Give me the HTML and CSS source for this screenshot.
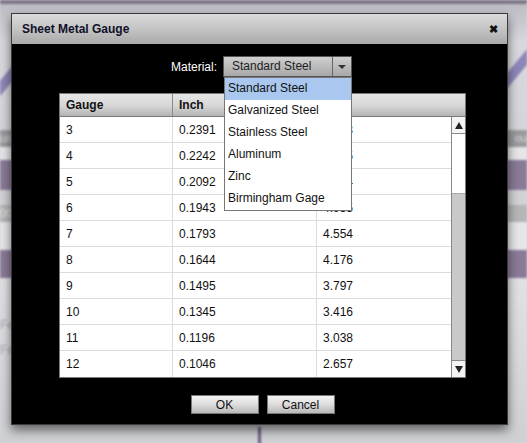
FILE: index.html
```html
<!DOCTYPE html>
<html lang="en">
<head>
  <meta charset="UTF-8">
  <meta name="viewport" content="width=device-width, initial-scale=1.0">
  <title>Sheet Metal Gauge</title>
  <link rel="stylesheet" href="styles.css">
</head>
<body>
  <div class="backdrop">
    <div class="bd-top"></div>
    <div class="bd-head">
      <div class="bd-swoosh left"></div>
      <div class="bd-swoosh right"></div>
    </div>
    <div class="bd-bar"><span>un</span><span>ou</span></div>
    <div class="bd-light"></div>
    <div class="bd-purple"></div>
    <div class="bd-gray"></div>
    <div class="bd-bar2"><span>00</span></div>
    <div class="bd-light tall"></div>
    <div class="bd-purple short"></div>
    <div class="bd-rest">
      <div class="bd-label">Fe</div>
      <div class="bd-label">Fe</div>
      <div class="bd-line"></div>
    </div>
  </div>

  <div class="dialog">
    <div class="dialog-title">
      <span>Sheet Metal Gauge</span>
      <span class="close">&#x2716;</span>
    </div>
    <div class="dialog-body">
      <div class="material-row">
        <label>Material:</label>
        <div class="select">
          <span class="select-text">Standard Steel</span>
          <span class="select-arrow"></span>
        </div>
      </div>

      <div class="grid">
        <div class="grid-head">
          <div class="hcell c1">Gauge</div>
          <div class="hcell c2">Inch</div>
          <div class="hcell c3">mm</div>
        </div>
        <div class="grid-main">
          <div class="grid-rows" id="rows"></div>
          <div class="scrollbar">
            <div class="sb-btn"><span class="tri up"></span></div>
            <div class="sb-thumb"></div>
            <div class="sb-track"></div>
            <div class="sb-btn"><span class="tri down"></span></div>
          </div>
        </div>
      </div>

      <div class="buttons">
        <button>OK</button>
        <button>Cancel</button>
      </div>
    </div>

    <ul class="dropdown">
      <li class="selected">Standard Steel</li>
      <li>Galvanized Steel</li>
      <li>Stainless Steel</li>
      <li>Aluminum</li>
      <li>Zinc</li>
      <li>Birmingham Gage</li>
    </ul>
  </div>

<script>
  const gauges = [
    [3, '0.2391', '6.073'],
    [4, '0.2242', '5.695'],
    [5, '0.2092', '5.314'],
    [6, '0.1943', '4.935'],
    [7, '0.1793', '4.554'],
    [8, '0.1644', '4.176'],
    [9, '0.1495', '3.797'],
    [10, '0.1345', '3.416'],
    [11, '0.1196', '3.038'],
    [12, '0.1046', '2.657']
  ];

  const rows = document.getElementById('rows');
  gauges.forEach(g => {
    const row = document.createElement('div');
    row.className = 'row';
    row.innerHTML = `<div class="cell c1">${g[0]}</div><div class="cell c2">${g[1]}</div><div class="cell c3">${g[2]}</div>`;
    rows.appendChild(row);
  });
</script>
</body>
</html>
```

FILE: styles.css
```css
body {
  margin: 0;
  width: 527px;
  height: 443px;
  overflow: hidden;
  position: relative;
  font-family: Arial, "Liberation Sans", sans-serif;
  font-size: 12px;
  background: #d4d4d8;
}

/* blurred app behind the dialog */
.backdrop {
  width: 527px;
  height: 443px;
  filter: blur(1px);
}
.bd-top {
  height: 4px;
  background: #7c7586;
}
.bd-head {
  height: 126px;
  position: relative;
  overflow: hidden;
  background: linear-gradient(#bdbbc3, #d9d8de 30%, #d6d5db);
}
.bd-swoosh {
  position: absolute;
  width: 60px;
  height: 10px;
  background: #8d86b8;
  transform: rotate(-50deg);
}
.bd-swoosh.left {
  left: -22px;
  top: 70px;
}
.bd-swoosh.right {
  right: -20px;
  top: 60px;
}
.bd-bar {
  height: 17px;
  background: #9b9a9e;
  color: #d8d8d8;
  display: flex;
  justify-content: space-between;
  line-height: 17px;
  font-size: 11px;
}
.bd-bar2 {
  height: 17px;
  background: #b6b5b8;
  color: #e4e4e4;
  line-height: 17px;
  font-size: 11px;
}
.bd-light {
  height: 13px;
  background: #e6e6ea;
}
.bd-light.tall {
  height: 28px;
}
.bd-purple {
  height: 30px;
  background: #8a7b98;
}
.bd-purple.short {
  height: 28px;
}
.bd-gray {
  height: 15px;
  background: #d2d2d6;
}
.bd-rest {
  height: 165px;
  background: linear-gradient(#e2e2e6, #cfd0d4);
  padding-top: 40px;
  box-sizing: border-box;
}
.bd-label {
  color: #a8a8ac;
  font-size: 12px;
  height: 25px;
}
.bd-line {
  width: 3px;
  height: 30px;
  margin: 59px 0 0 258px;
  background: #6c5f84;
}

/* dialog */
.dialog {
  position: absolute;
  left: 11px;
  top: 13px;
  width: 495px;
  height: 410px;
  border: 1px solid #3a3a3a;
  background: #000;
  box-shadow: 0 5px 10px rgba(0, 0, 0, 0.55);
}
.dialog-title {
  height: 30px;
  padding: 0 10px 0 10px;
  display: flex;
  align-items: center;
  justify-content: space-between;
  background: linear-gradient(#dadada, #c4c4c4 50%, #a9a9a9);
  color: #101028;
  font-weight: bold;
  font-size: 12px;
}
.close {
  font-size: 11px;
  color: #111;
  margin-right: -1px;
}
.dialog-body {
  padding-top: 12px;
}
.material-row {
  display: flex;
  align-items: center;
  justify-content: center;
  gap: 6px;
  padding-left: 4px;
}
.material-row label {
  color: #fff;
}
.select {
  width: 127px;
  height: 19px;
  border: 1px solid #555;
  display: flex;
  background: linear-gradient(#cfcfcf, #a8a8a8);
}
.select-text {
  flex: 1;
  line-height: 19px;
  padding-left: 8px;
  color: #222;
}
.select-arrow {
  width: 18px;
  border-left: 1px solid #666;
  position: relative;
}
.select-arrow::after {
  content: "";
  position: absolute;
  left: 5px;
  top: 8px;
  border-left: 4px solid transparent;
  border-right: 4px solid transparent;
  border-top: 4px solid #333;
}

.dropdown {
  position: absolute;
  left: 212px;
  top: 63px;
  width: 126px;
  margin: 0;
  padding: 0;
  list-style: none;
  background: #fff;
  border: 1px solid #777;
}
.dropdown li {
  height: 22px;
  line-height: 21px;
  padding-left: 3px;
  color: #111;
}
.dropdown li.selected {
  background: #a9c7ef;
}

/* table */
.grid {
  width: 405px;
  margin: 16px 0 0 47px;
  border: 1px solid #777;
  background: #fff;
}
.grid-head {
  display: flex;
  height: 22px;
  border-bottom: 1px solid #7a7a7a;
  background: linear-gradient(#e6e6e6, #d6d6d6 55%, #b4b4b4);
}
.hcell {
  font-weight: bold;
  line-height: 22px;
  padding-left: 6px;
  color: #111;
  box-sizing: border-box;
  border-right: 1px solid #8a8a8a;
}
.hcell.c3 {
  border-right: none;
  flex: 1;
}
.c1 {
  width: 113px;
}
.c2 {
  width: 144px;
}
.c3 {
  width: 134px;
}
.grid-main {
  display: flex;
}
.grid-rows {
  width: 391px;
}
.row {
  display: flex;
  height: 25px;
  border-bottom: 1px solid #dcdcdc;
}
.row:last-child {
  border-bottom: none;
  height: 26px;
}
.cell {
  box-sizing: border-box;
  padding-left: 6px;
  line-height: 26px;
  color: #111;
  border-right: 1px solid #dcdcdc;
}
.cell.c3 {
  border-right: none;
}
.scrollbar {
  width: 13px;
  border-left: 1px solid #888;
  display: flex;
  flex-direction: column;
}
.sb-btn {
  height: 16px;
  background: #f4f4f4;
  border-bottom: 1px solid #888;
  position: relative;
}
.sb-btn:last-child {
  border-bottom: none;
  border-top: 1px solid #888;
}
.sb-thumb {
  height: 59px;
  background: #fff;
  border-bottom: 1px solid #aaa;
}
.sb-track {
  flex: 1;
  background: #c9c9c9;
}
.tri {
  position: absolute;
  left: 3px;
  top: 5px;
  border-left: 4px solid transparent;
  border-right: 4px solid transparent;
}
.tri.up {
  border-bottom: 7px solid #222;
}
.tri.down {
  border-top: 7px solid #222;
}

.buttons {
  display: flex;
  justify-content: center;
  gap: 8px;
  margin-top: 17px;
  padding-left: 6px;
}
.buttons button {
  width: 68px;
  height: 19px;
  padding: 0;
  font-family: Arial, "Liberation Sans", sans-serif;
  font-size: 12px;
  color: #111;
  border: 1px solid #777;
  border-radius: 0;
  background: linear-gradient(#f4f4f4, #dcdcdc 50%, #b8b8b8);
}
```
